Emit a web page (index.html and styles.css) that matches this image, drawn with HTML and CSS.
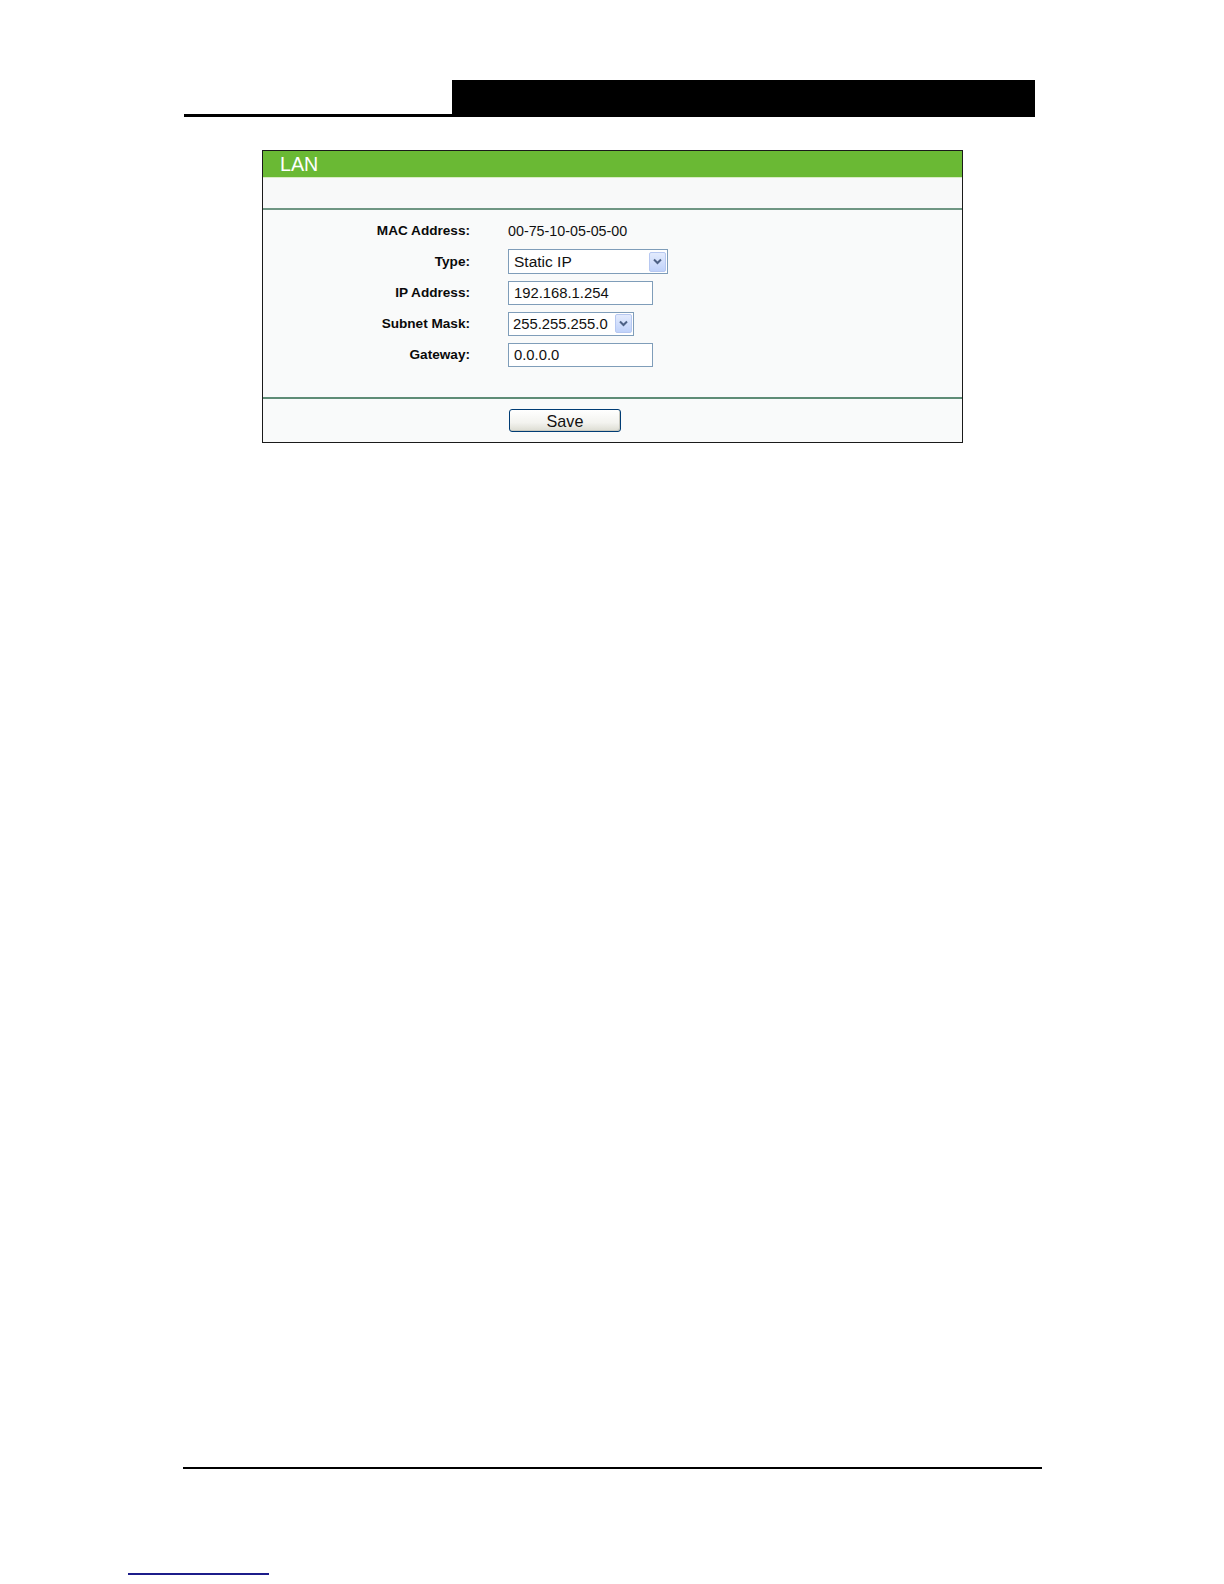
FILE: index.html
```html
<!DOCTYPE html>
<html>
<head>
<meta charset="utf-8">
<title>LAN</title>
<link rel="stylesheet" href="styles.css">
</head>
<body>
<div class="page">
  <div class="doc-header">
    <div class="doc-header-rule"></div>
    <div class="doc-header-bar"></div>
  </div>

  <div class="panel">
    <div class="panel-title">LAN</div>
    <div class="panel-sub"></div>
    <div class="panel-body">
      <div class="form-grid">
        <div class="label">MAC Address:</div>
        <div class="value"><span class="mac">00-75-10-05-05-00</span></div>

        <div class="label">Type:</div>
        <div class="value">
          <div class="select select-type">
            <span class="select-text">Static IP</span>
            <span class="select-arrow"><svg width="9" height="7" viewBox="0 0 9 7"><path d="M1 1.5 L4.5 5 L8 1.5" fill="none" stroke="#4d6185" stroke-width="2"/></svg></span>
          </div>
        </div>

        <div class="label">IP Address:</div>
        <div class="value"><div class="input">192.168.1.254</div></div>

        <div class="label">Subnet Mask:</div>
        <div class="value">
          <div class="select select-mask">
            <span class="select-text">255.255.255.0</span>
            <span class="select-arrow"><svg width="9" height="7" viewBox="0 0 9 7"><path d="M1 1.5 L4.5 5 L8 1.5" fill="none" stroke="#4d6185" stroke-width="2"/></svg></span>
          </div>
        </div>

        <div class="label">Gateway:</div>
        <div class="value"><div class="input">0.0.0.0</div></div>
      </div>
    </div>
    <div class="panel-foot">
      <button class="btn" type="button">Save</button>
    </div>
  </div>

  <div class="doc-footer-rule"></div>
  <div class="doc-link-rule"></div>
</div>
</body>
</html>
```

FILE: styles.css
```css
html, body {
  margin: 0;
  padding: 0;
  background: #ffffff;
}

body {
  font-family: "Liberation Sans", Arial, sans-serif;
  color: #000;
}

.page {
  width: 1224px;
  height: 1584px;
  padding-top: 80px;
  box-sizing: border-box;
  overflow: hidden;
}

.doc-header {
  display: flex;
  align-items: flex-end;
  margin-left: 184px;
}

.doc-header-rule {
  width: 268px;
  height: 3px;
  background: #000;
}

.doc-header-bar {
  width: 583px;
  height: 37px;
  background: #000;
}

.panel {
  margin-top: 33px;
  margin-left: 262px;
  width: 701px;
  border: 1px solid #1a1a1a;
  box-sizing: border-box;
  background: #f9fafa;
}

.panel-title {
  height: 27px;
  background: #6ab934;
  color: #ffffff;
  font-size: 19.7px;
  line-height: 26px;
  padding-left: 17px;
  border-bottom: 1px solid #d9ecc4;
  box-sizing: border-box;
}

.panel-sub {
  height: 30px;
  background: #f8f9f9;
  border-bottom: 2px solid #6f9683;
}

.panel-body {
  padding: 5px 0 27px 0;
  border-bottom: 2px solid #5e8c76;
}

.form-grid {
  display: grid;
  grid-template-columns: 207px 1fr;
  column-gap: 38px;
  grid-auto-rows: 31px;
}

.label {
  font-weight: bold;
  font-size: 13.6px;
  display: flex;
  align-items: center;
  justify-content: flex-end;
  color: #0a0a0a;
}

.value {
  display: flex;
  align-items: center;
}

.mac {
  font-size: 14.3px;
  color: #111;
}

.input,
.select {
  height: 24px;
  box-sizing: border-box;
  border: 1px solid #7f9db9;
  background: #ffffff;
  font-size: 14.8px;
  line-height: 22px;
  padding-left: 5px;
  color: #111;
}

.input {
  width: 145px;
}

.select {
  display: flex;
  align-items: center;
  justify-content: space-between;
  padding-right: 1px;
}

.select-type {
  width: 160px;
  height: 25px;
  font-size: 15.5px;
}

.select-mask {
  width: 126px;
  padding-left: 4px;
}

.select-arrow {
  width: 17px;
  height: 20px;
  box-sizing: border-box;
  border: 1px solid #b7c8f1;
  border-radius: 2px;
  background: linear-gradient(#e3ebfd, #c0d2fa);
  display: flex;
  align-items: center;
  justify-content: center;
}

.select-mask .select-arrow {
  height: 19px;
}

.panel-foot {
  height: 43px;
  display: flex;
  align-items: center;
  padding-left: 246px;
}

.btn {
  width: 112px;
  height: 23px;
  border: 1px solid #003c74;
  border-radius: 3px;
  background: linear-gradient(#ffffff 0%, #f3f3ef 60%, #dcdcd2 100%);
  font-family: "Liberation Sans", Arial, sans-serif;
  font-size: 16.2px;
  color: #111;
  padding: 0;
  line-height: 20px;
  box-shadow: inset -1px -1px 0 #c9c9bf;
}

.doc-footer-rule {
  margin-top: 1024px;
  margin-left: 183px;
  width: 859px;
  height: 2px;
  background: #000;
}

.doc-link-rule {
  margin-top: 104px;
  margin-left: 128px;
  width: 141px;
  height: 2px;
  background: #1c1c8a;
}
```
